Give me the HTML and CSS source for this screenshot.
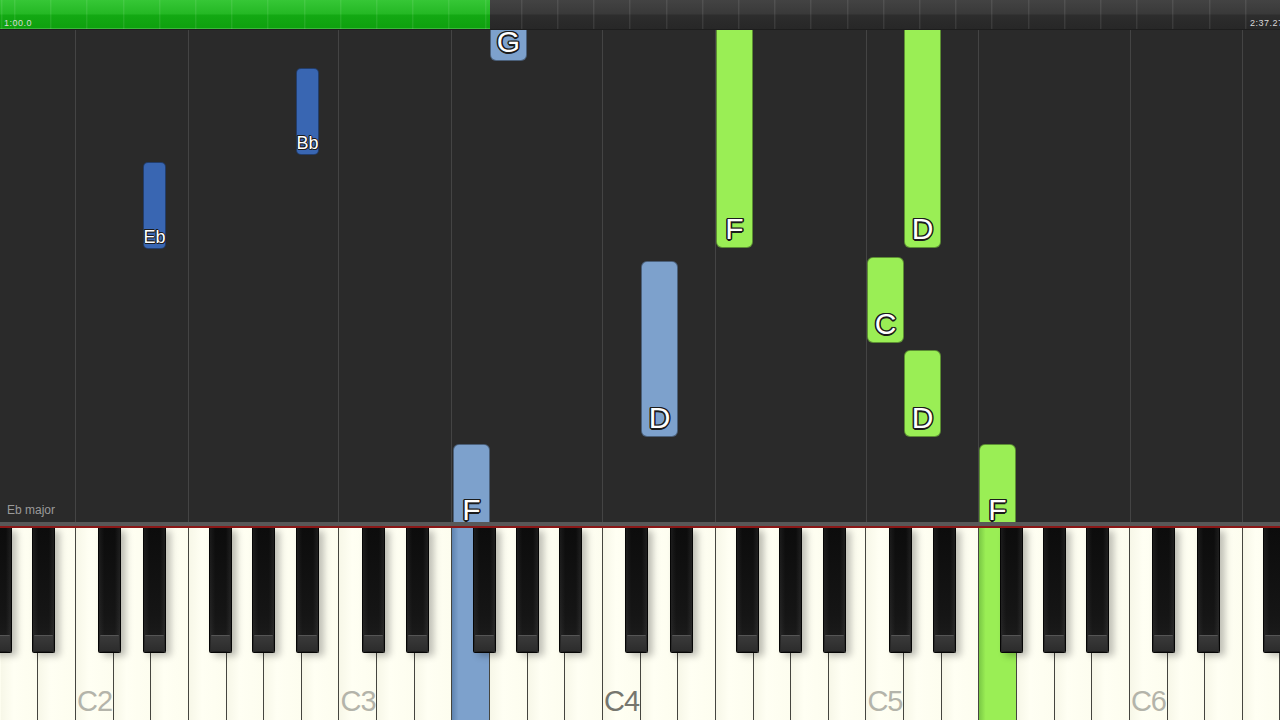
FILE: index.html
```html
<!DOCTYPE html>
<html lang="en">
<head>
<meta charset="utf-8">
<title>Piano roll</title>
<link rel="stylesheet" href="styles.css">
</head>
<body>
<div class="app">
  <header class="timeline">
    <div class="progress"></div>
    <div class="track"></div>
    <span class="time time-start">1:00.0</span>
    <span class="time time-end">2:37.27</span>
  </header>

  <main class="roll">
    <div class="gridline" style="left:75px"></div>
    <div class="gridline" style="left:188px"></div>
    <div class="gridline" style="left:338px"></div>
    <div class="gridline" style="left:451px"></div>
    <div class="gridline" style="left:602px"></div>
    <div class="gridline" style="left:715px"></div>
    <div class="gridline" style="left:866px"></div>
    <div class="gridline" style="left:978px"></div>
    <div class="gridline" style="left:1130px"></div>
    <div class="gridline" style="left:1242px"></div>

    <div class="note wide lightblue" style="left:490px;top:-15px;height:46px"><span class="label">G</span></div>
    <div class="note narrow darkblue" style="left:296px;top:38px;height:87px"><span class="label small">Bb</span></div>
    <div class="note narrow darkblue" style="left:143px;top:132px;height:87px"><span class="label small">Eb</span></div>
    <div class="note wide green" style="left:716px;top:-10px;height:228px"><span class="label">F</span></div>
    <div class="note wide green" style="left:904px;top:-10px;height:228px"><span class="label">D</span></div>
    <div class="note wide green" style="left:867px;top:227px;height:86px"><span class="label">C</span></div>
    <div class="note wide green" style="left:904px;top:320px;height:87px"><span class="label">D</span></div>
    <div class="note wide lightblue" style="left:641px;top:231px;height:176px"><span class="label">D</span></div>
    <div class="note wide lightblue cut" style="left:453px;top:414px;height:78px"><span class="label">F</span></div>
    <div class="note wide green cut" style="left:979px;top:414px;height:78px"><span class="label">F</span></div>

    <div class="key-sig">Eb major</div>
  </main>

  <div class="rail"></div>

  <section class="keyboard">
    <div class="whites">
      <div class="wkey"></div>
      <div class="wkey"></div>
      <div class="wkey"><span class="oct">C2</span></div>
      <div class="wkey"></div>
      <div class="wkey"></div>
      <div class="wkey"></div>
      <div class="wkey"></div>
      <div class="wkey"></div>
      <div class="wkey"></div>
      <div class="wkey"><span class="oct">C3</span></div>
      <div class="wkey"></div>
      <div class="wkey"></div>
      <div class="wkey on-blue"></div>
      <div class="wkey"></div>
      <div class="wkey"></div>
      <div class="wkey"></div>
      <div class="wkey"><span class="oct mid">C4</span></div>
      <div class="wkey"></div>
      <div class="wkey"></div>
      <div class="wkey"></div>
      <div class="wkey"></div>
      <div class="wkey"></div>
      <div class="wkey"></div>
      <div class="wkey"><span class="oct">C5</span></div>
      <div class="wkey"></div>
      <div class="wkey"></div>
      <div class="wkey on-green"></div>
      <div class="wkey"></div>
      <div class="wkey"></div>
      <div class="wkey"></div>
      <div class="wkey"><span class="oct">C6</span></div>
      <div class="wkey"></div>
      <div class="wkey"></div>
      <div class="wkey"></div>
    </div>

    <div class="bkey" style="left:-11.2px"></div>
    <div class="bkey" style="left:32.2px"></div>
    <div class="bkey" style="left:98px"></div>
    <div class="bkey" style="left:142.7px"></div>
    <div class="bkey" style="left:209px"></div>
    <div class="bkey" style="left:252.3px"></div>
    <div class="bkey" style="left:295.7px"></div>
    <div class="bkey" style="left:361.5px"></div>
    <div class="bkey" style="left:406.2px"></div>
    <div class="bkey" style="left:472.5px"></div>
    <div class="bkey" style="left:515.8px"></div>
    <div class="bkey" style="left:559.2px"></div>
    <div class="bkey" style="left:625px"></div>
    <div class="bkey" style="left:669.7px"></div>
    <div class="bkey" style="left:736px"></div>
    <div class="bkey" style="left:779.3px"></div>
    <div class="bkey" style="left:822.7px"></div>
    <div class="bkey" style="left:888.5px"></div>
    <div class="bkey" style="left:933.2px"></div>
    <div class="bkey" style="left:999.5px"></div>
    <div class="bkey" style="left:1042.8px"></div>
    <div class="bkey" style="left:1086.2px"></div>
    <div class="bkey" style="left:1152px"></div>
    <div class="bkey" style="left:1196.7px"></div>
    <div class="bkey" style="left:1263px"></div>
  </section>
</div>
</body>
</html>
```

FILE: styles.css
```css
html, body {
  margin: 0;
  padding: 0;
  background: #2a2a2a;
}

.app {
  width: 1280px;
  height: 720px;
  overflow: hidden;
  display: flex;
  flex-direction: column;
  background: #2a2a2a;
  font-family: "Liberation Sans", Arial, sans-serif;
}

/* ---------- timeline ---------- */
.timeline {
  position: relative;
  flex: none;
  height: 30px;
  display: flex;
  box-sizing: border-box;
  border-bottom: 1px solid #1d1d1d;
  background: linear-gradient(#434343, #393939 48%, #2d2d2d 52%, #272727);
}

.progress {
  flex: 0 0 490px;
  background: linear-gradient(#36c736, #24b824 48%, #13a913 52%, #0ea00e);
  box-shadow: inset 0 -1px 0 rgba(140, 230, 140, 0.35);
}

.track {
  flex: 1;
}

.timeline::after {
  content: "";
  position: absolute;
  inset: 0;
  background: repeating-linear-gradient(to right,
      rgba(255, 255, 255, 0.12) 0 1px,
      transparent 1px 36.2px);
  background-position: 14.3px 0;
  pointer-events: none;
}

.time {
  position: absolute;
  top: 18px;
  font-size: 9px;
  line-height: 10px;
  letter-spacing: 0.5px;
  color: #d8d8d8;
  z-index: 1;
}

.time-start { left: 4px; }
.time-end { left: 1250px; white-space: nowrap; }

/* ---------- roll ---------- */
.roll {
  position: relative;
  flex: none;
  height: 492px;
  overflow: hidden;
  background: #2a2a2a;
}

.gridline {
  position: absolute;
  top: 0;
  bottom: 0;
  width: 1px;
  background: #444444;
}

.note {
  position: absolute;
  box-sizing: border-box;
  border: 1px solid rgba(0, 0, 0, 0.4);
  display: flex;
  flex-direction: column;
  justify-content: flex-end;
  align-items: center;
}

.note.cut {
  border-bottom: none;
  border-radius: 6px 6px 0 0 !important;
}

.note.cut .label {
  padding-bottom: 0;
  margin-bottom: -3px;
}

.note.wide {
  width: 37px;
  border-radius: 6px;
}

.note.narrow {
  width: 23px;
  border-radius: 5px;
}

.green { background: #9aee55; }
.lightblue { background: #7da1cc; }
.darkblue { background: #3966b2; }

.label {
  font-size: 30px;
  line-height: 1;
  padding-bottom: 3px;
  color: #ffffff;
  white-space: nowrap;
  text-shadow:
    -1.5px 0 0 #1b1b1b, 1.5px 0 0 #1b1b1b,
    0 -1.5px 0 #1b1b1b, 0 1.5px 0 #1b1b1b,
    -1.1px -1.1px 0 #1b1b1b, 1.1px -1.1px 0 #1b1b1b,
    -1.1px 1.1px 0 #1b1b1b, 1.1px 1.1px 0 #1b1b1b;
}

.label.small {
  font-size: 18px;
  padding-bottom: 2px;
  text-shadow:
    -1px 0 0 #1b1b1b, 1px 0 0 #1b1b1b,
    0 -1px 0 #1b1b1b, 0 1px 0 #1b1b1b,
    -0.7px -0.7px 0 #1b1b1b, 0.7px 0.7px 0 #1b1b1b;
}

.key-sig {
  position: absolute;
  left: 7px;
  bottom: 5px;
  font-size: 12px;
  line-height: 14px;
  color: #9a9a9a;
}

/* ---------- rail ---------- */
.rail {
  flex: none;
  height: 4px;
  background: #585858;
  border-bottom: 2px solid #8a1717;
}

/* ---------- keyboard ---------- */
.keyboard {
  position: relative;
  flex: 1;
  overflow: hidden;
  background: #fdfdef;
}

.whites {
  display: flex;
  height: 100%;
  margin-left: 0.7px;
}

.wkey {
  flex: 0 0 37.643px;
  box-sizing: border-box;
  border-right: 1.5px solid #45453f;
  background: linear-gradient(to right, #f7f7e8, #fffff3 35%, #fdfdef);
  display: flex;
  align-items: flex-end;
}

.wkey.on-blue {
  background: linear-gradient(to right, #5f84b0, #7da1cc 18%, #7da1cc);
}

.wkey.on-green {
  background: linear-gradient(to right, #7ac845, #9aee55 18%, #9aee55);
}

.oct {
  font-size: 29px;
  line-height: 1;
  letter-spacing: -1px;
  padding: 0 0 4px 1px;
  color: #b4b4aa;
  white-space: nowrap;
}

.oct.mid {
  color: #76766e;
}

.bkey {
  position: absolute;
  top: 0;
  width: 23px;
  height: 125px;
  box-sizing: border-box;
  border: 1.5px solid #050505;
  border-top: none;
  border-radius: 0 0 2px 2px;
  background:
    linear-gradient(to right, rgba(255,255,255,0.06), rgba(255,255,255,0) 25%, rgba(255,255,255,0) 75%, rgba(255,255,255,0.07)),
    linear-gradient(#0c0c0c, #151515 70%, #1e1e1e);
  box-shadow: 5px 3px 7px rgba(0, 0, 0, 0.25);
}

.bkey::after {
  content: "";
  position: absolute;
  left: 1px;
  right: 1px;
  bottom: 1px;
  height: 16px;
  border-radius: 1px;
  background: linear-gradient(#555555 0 1px, #3a3a3a 1px, #2c2c2c);
}
```
